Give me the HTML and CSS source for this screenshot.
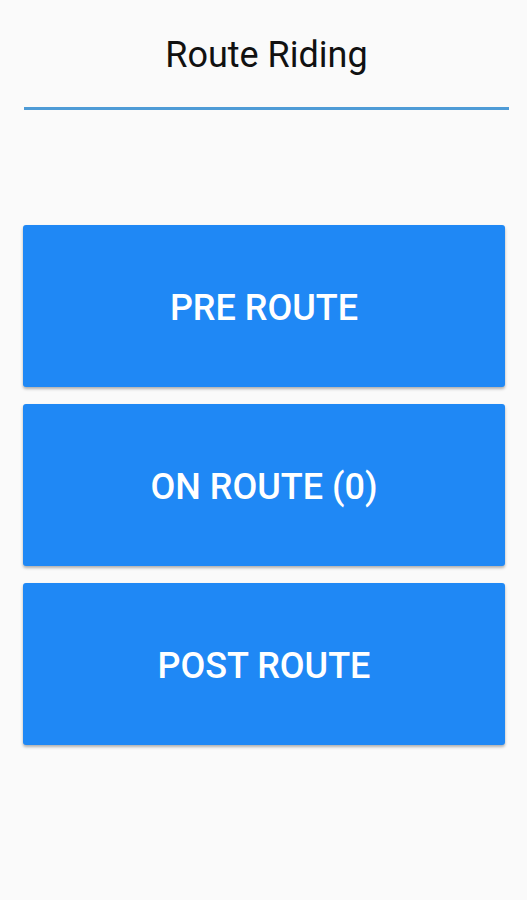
FILE: index.html
```html
<!DOCTYPE html>
<html>
  <head>
    <meta charset="UTF-8">
    <title>Route Riding</title>
    <link rel="stylesheet" href="styles.css">
  </head>
  <body>
    <section class="screen">
      <header class="topbar">
        <h1 class="title">Route Riding</h1>
      </header>
      <div class="menu">
        <button class="menu-btn">PRE ROUTE</button>
        <button class="menu-btn">ON ROUTE (0)</button>
        <button class="menu-btn">POST ROUTE</button>
      </div>
    </section>
  </body>
</html>
```

FILE: styles.css
```css
body{
  margin:0;
  background-color:#fafafa;
  font-family:Roboto, "Noto Sans", sans-serif;
}
.screen{
  width:527px;
  height:900px;
}
.topbar{
  margin:0 18px 0 24px;
  height:107px;
  border-bottom:3px solid #4e9bd6;
  display:flex;
  justify-content:center;
}
.title{
  margin:0;
  padding-top:34px;
  font-size:36px;
  font-weight:400;
  color:#111;
  line-height:42px;
}
.menu{
  display:flex;
  flex-direction:column;
  gap:17px;
  margin:115px 22px 0 23px;
}
.menu-btn{
  height:162px;
  border:none;
  border-radius:3px;
  background-color:#1f88f5;
  color:#fff;
  font-family:Roboto, sans-serif;
  font-size:36px;
  font-weight:500;
  padding-top:4px;
  box-shadow:0 2px 3px rgba(0,0,0,0.3);
}
```
